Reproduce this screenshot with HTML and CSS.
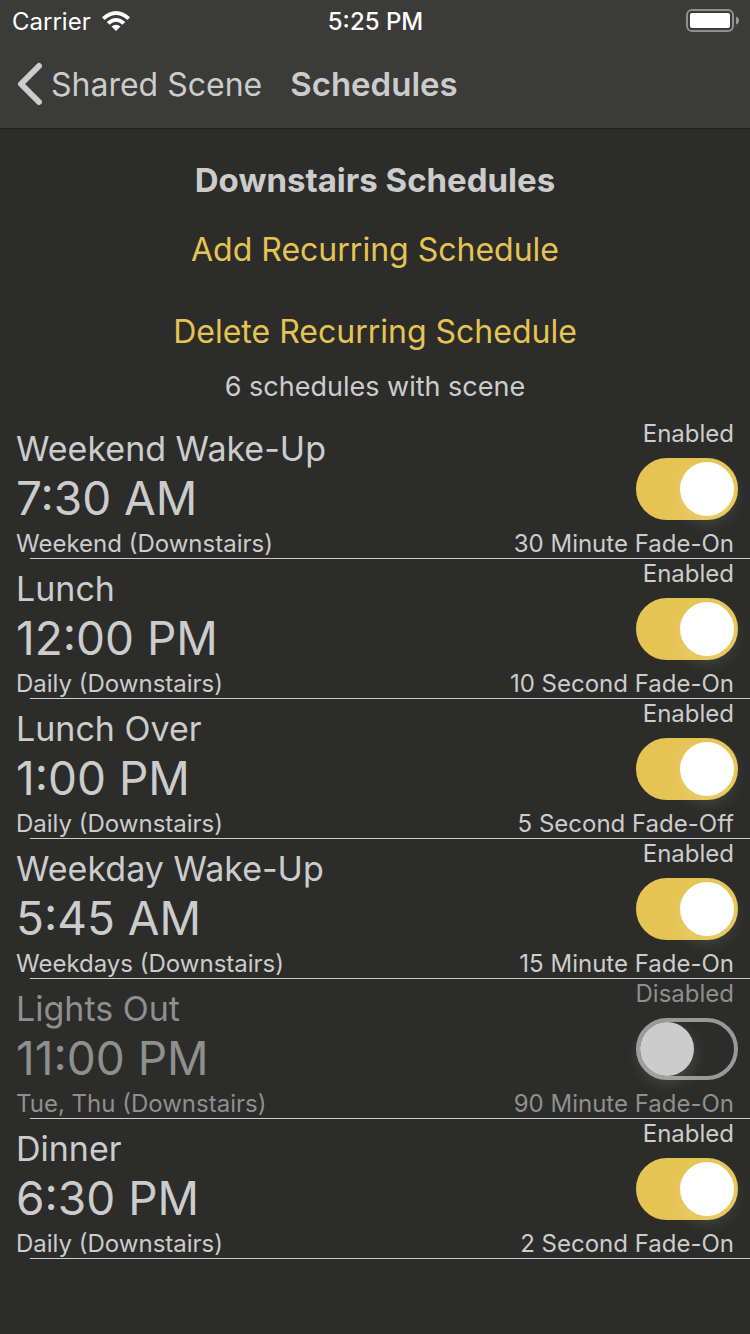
FILE: index.html
```
<!DOCTYPE html>
<html lang="en">
<head>
<meta charset="utf-8">
<meta name="viewport" content="width=device-width, initial-scale=1">
<title>Schedules</title>
<link rel="stylesheet" href="styles.css">
</head>
<body>
<header class="topbar">
  <div class="status">
    <div class="status-left">
      <span>Carrier</span>
      <svg class="wifi" viewBox="0 0 28 20" aria-hidden="true">
        <path d="M0 6.200Q14-6 28 6.200L25.300 9Q14-1 2.700 9Z"/>
        <path d="M4.800 11Q14 2.800 23.200 11L20.500 13.700Q14 8 7.500 13.700Z"/>
        <path d="M9.500 15.600Q14 12 18.500 15.600L14 20Z"/>
      </svg>
    </div>
    <time class="clock">5:25 PM</time>
    <svg class="battery" viewBox="0 0 53 24" aria-hidden="true">
      <rect class="battery-case" x="1" y="1" width="46" height="21" rx="5"/>
      <rect class="battery-level" x="4" y="4" width="40" height="15" rx="2"/>
      <path class="battery-tip" d="M50 7.500Q53 8.500 53 11.500T50 15.500Z"/>
    </svg>
  </div>
  <nav class="nav">
    <a class="back" href="#">
      <svg class="chevron" viewBox="0 0 26 44" aria-hidden="true"><path d="M22 4L4 22L22 40"/></svg>
      <span>Shared Scene</span>
    </a>
    <h1 class="nav-title">Schedules</h1>
  </nav>
</header>
<main>
  <section class="intro">
    <h2 class="heading">Downstairs Schedules</h2>
    <button class="action" type="button">Add Recurring Schedule</button>
    <button class="action" type="button">Delete Recurring Schedule</button>
    <p class="count">6 schedules with scene</p>
  </section>
  <ul class="list">
    <li class="row">
      <div class="info"><h3 class="name">Weekend Wake-Up</h3><time class="time">7:30 AM</time><p class="small">Weekend (Downstairs)</p></div>
      <div class="side"><label class="small" for="s1">Enabled</label><input class="switch" id="s1" type="checkbox" role="switch" checked><p class="small">30 Minute Fade-On</p></div>
    </li>
    <li class="row">
      <div class="info"><h3 class="name">Lunch</h3><time class="time">12:00 PM</time><p class="small">Daily (Downstairs)</p></div>
      <div class="side"><label class="small" for="s2">Enabled</label><input class="switch" id="s2" type="checkbox" role="switch" checked><p class="small">10 Second Fade-On</p></div>
    </li>
    <li class="row">
      <div class="info"><h3 class="name">Lunch Over</h3><time class="time">1:00 PM</time><p class="small">Daily (Downstairs)</p></div>
      <div class="side"><label class="small" for="s3">Enabled</label><input class="switch" id="s3" type="checkbox" role="switch" checked><p class="small">5 Second Fade-Off</p></div>
    </li>
    <li class="row">
      <div class="info"><h3 class="name">Weekday Wake-Up</h3><time class="time">5:45 AM</time><p class="small">Weekdays (Downstairs)</p></div>
      <div class="side"><label class="small" for="s4">Enabled</label><input class="switch" id="s4" type="checkbox" role="switch" checked><p class="small">15 Minute Fade-On</p></div>
    </li>
    <li class="row row-off">
      <div class="info"><h3 class="name">Lights Out</h3><time class="time">11:00 PM</time><p class="small">Tue, Thu (Downstairs)</p></div>
      <div class="side"><label class="small" for="s5">Disabled</label><input class="switch" id="s5" type="checkbox" role="switch"><p class="small">90 Minute Fade-On</p></div>
    </li>
    <li class="row">
      <div class="info"><h3 class="name">Dinner</h3><time class="time">6:30 PM</time><p class="small">Daily (Downstairs)</p></div>
      <div class="side"><label class="small" for="s6">Enabled</label><input class="switch" id="s6" type="checkbox" role="switch" checked><p class="small">2 Second Fade-On</p></div>
    </li>
  </ul>
</main>
</body>
</html>
```

FILE: styles.css
```
* {
  box-sizing: border-box;
}

body {
  margin: 0;
  min-height: 100vh;
  background: #2c2c2a;
  color: #ccc;
  font-family: Inter, "Liberation Sans", sans-serif;
}

h1, h2, h3, p, ul {
  margin: 0;
  padding: 0;
}

.topbar {
  padding-bottom: 2px;
  background: #3b3b39;
  border-bottom: 1px solid #1f1f1e;
}

.status {
  display: grid;
  grid-template-columns: 1fr auto 1fr;
  align-items: center;
  height: 42px;
  padding: 0 11px 0 12px;
  color: #fff;
  font-size: 24px;
}

.status-left {
  display: flex;
  align-items: center;
  gap: 11px;
}

.wifi {
  width: 28px;
  height: 20px;
  fill: #fff;
}

.clock {
  font-weight: 500;
}

.battery {
  justify-self: end;
  width: 53px;
  height: 24px;
}

.battery-case {
  fill: none;
  stroke: #8f8f8e;
  stroke-width: 2;
}

.battery-level {
  fill: #fff;
}

.battery-tip {
  fill: #9b9b9a;
}

.nav {
  display: flex;
  align-items: center;
  gap: 28px;
  height: 84px;
  padding-left: 17px;
}

.back {
  display: flex;
  align-items: center;
  gap: 8px;
  color: inherit;
  font-size: 32px;
  text-decoration: none;
}

.chevron {
  width: 26px;
  height: 44px;
  fill: none;
  stroke: #ccc;
  stroke-width: 6;
  stroke-linecap: round;
  stroke-linejoin: round;
}

.nav-title {
  font-size: 33px;
  font-weight: 600;
}

.intro {
  display: flex;
  flex-direction: column;
  align-items: center;
  padding: 29px 0 17px;
}

.heading {
  margin-bottom: 6px;
  font-size: 33px;
  font-weight: 700;
  line-height: 44px;
}

.action {
  height: 82px;
  padding: 0 16px;
  border: 0;
  background: none;
  color: #e6c454;
  font: inherit;
  font-size: 32px;
}

.count {
  font-size: 27px;
  line-height: 30px;
}

.list {
  list-style: none;
}

.row {
  position: relative;
  display: flex;
  justify-content: space-between;
  height: 140px;
  padding: 0 16px;
}

.row::after {
  content: "";
  position: absolute;
  right: 0;
  bottom: 0;
  left: 30px;
  height: 1px;
  background: #ccc;
}

.row-off {
  color: #8f8f8e;
}

.info,
.side {
  display: flex;
  flex-direction: column;
  justify-content: space-between;
}

.info {
  padding-top: 8px;
}

.side {
  align-items: flex-end;
}

.name {
  font-size: 34px;
  font-weight: 400;
  line-height: 44px;
}

.time {
  margin-bottom: auto;
  font-size: 46px;
  line-height: 54px;
}

.small {
  font-size: 24px;
  line-height: 30px;
}

.switch {
  appearance: none;
  display: flex;
  align-items: center;
  width: 102px;
  height: 62px;
  margin: 0 -4px 0 0;
  padding: 0;
  border: 4px solid #999;
  border-radius: 31px;
  background: transparent;
}

.switch::before {
  content: "";
  width: 54px;
  height: 54px;
  border-radius: 50%;
  background: #ccc;
  box-shadow: 0 6px 16px rgba(255, 255, 255, 0.15);
}

.switch:checked {
  justify-content: flex-end;
  border-color: #e6c454;
  background: #e6c454;
}

.switch:checked::before {
  background: #fff;
}
```
